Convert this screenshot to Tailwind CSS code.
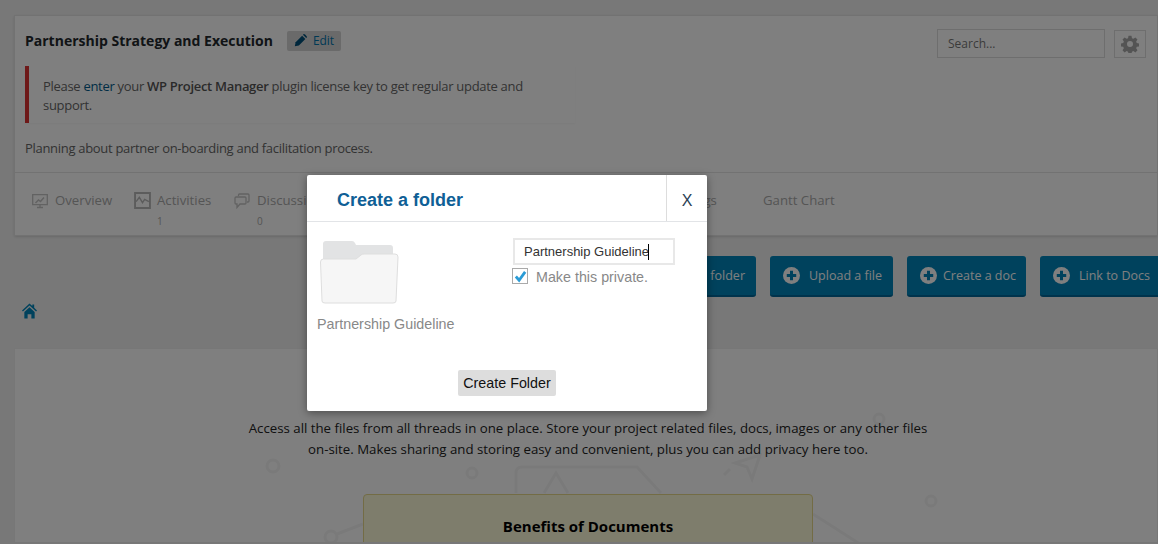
<!DOCTYPE html>
<html lang="en">

<head>
    <meta charset="UTF-8">
    <meta name="viewport" content="width=device-width, initial-scale=1.0">
    <title>Create a folder</title>
    <script src="https://cdn.jsdelivr.net/npm/@tailwindcss/browser@4"></script>
</head>

<body class="relative h-[544px] w-[1158px] overflow-hidden bg-[#f1f1f1] font-['Open_Sans',sans-serif] text-[13px] text-[#444]">

    <div class="pl-[14px] pt-[15px]">
        <!-- project header -->
        <section class="h-[221px] border border-[#e5e5e5] bg-white shadow-sm">
            <div class="flex items-start justify-between pl-[10px] pr-[11px]">
                <div class="w-[560px]">
                    <div class="flex h-[49px] items-center">
                        <h1 class="text-[14px] font-bold text-[#23282d]">Partnership Strategy and Execution</h1>
                        <a class="ml-[14px] flex h-[20px] w-[54px] items-center justify-center gap-[6px] rounded-[2px] bg-[#d5d5d5] text-[12px] tracking-[-0.1px] text-[#0073aa]">
                            <svg class="h-[13px] w-[13px]" viewBox="0 0 16 16" fill="#004f78"><path d="M1 15l1-5 8-8 4 4-8 8z" /><path d="M11 1l1-1q1 0 2 1l1 1q1 1 1 2l-1 1z" /></svg>
                            Edit
                        </a>
                    </div>
                    <div class="mt-[1px] flex h-[57px] w-[550px] items-center border-l-4 border-[#dc3232] bg-white pl-[14px] pr-[20px] pt-[2px] leading-[19px] tracking-[-0.3px] text-[#666] shadow-[0_1px_2px_rgba(0,0,0,0.04)]">
                        <p>Please <a class="text-[#005a8a]">enter</a> your <b class="font-semibold text-[#555]">WP Project Manager</b> plugin license key to get regular update and support.</p>
                    </div>
                    <p class="mt-[16px] tracking-[-0.3px] text-[#666]">Planning about partner on-boarding and facilitation process.</p>
                </div>
                <div class="flex items-center gap-[9px] pt-[13px]">
                    <input type="text" placeholder="Search..." class="h-[29px] w-[168px] border border-[#ddd] bg-white px-[10px] text-[12px] text-[#777] placeholder:text-[#777]">
                    <div class="flex h-[28px] w-[32px] items-center justify-center border border-[#ddd]">
                        <svg class="h-[18px] w-[18px]" viewBox="0 0 24 24" fill="#a8a8a8"><path d="M10 1h4l.6 3.200 1.900.8 2.700-1.800 2.800 2.800-1.800 2.700.8 1.900 3 .6v4l-3 .6-.8 1.900 1.800 2.700-2.800 2.800-2.700-1.800-1.900.8-.6 3h-4l-.6-3-1.900-.8-2.700 1.800-2.800-2.800 1.800-2.700-.8-1.900-3-.6v-4l3-.6.8-1.900-1.800-2.700 2.800-2.800 2.700 1.800 1.900-.8zM12 8a4 4 0 1 0 0 8 4 4 0 0 0 0-8z" fill-rule="evenodd" /></svg>
                    </div>
                </div>
            </div>

            <!-- tabs -->
            <nav class="mt-[13px] flex h-[64px] border-t border-[#e5e5e5] pl-[17px] pt-[18px] text-[13.200px] leading-[18px] text-[#aaa]">
                <div class="flex w-[102px] gap-[7px]">
                    <svg class="mt-[2px] h-[16px] w-[16px]" viewBox="0 0 16 16" fill="none" stroke="#c4c4c4" stroke-width="1.300"><path d="M.7 1.700h14.600v10H.7zM5 14.500h6M8 12v2" /><path d="M3.500 10l3-3 2 1.500 3.500-4" stroke-width="1.500" /></svg>
                    <span>Overview</span>
                </div>
                <div class="flex w-[100px] gap-[6px]">
                    <svg class="mt-[1px] h-[17px] w-[17px]" viewBox="0 0 16 16" fill="none" stroke="#b8b8b8" stroke-width="1.800"><path d="M1 1h14v14H1z" /><path d="M2 9l3-4 3 5 2-3 4 2" stroke-width="1.300" /></svg>
                    <div>
                        <span>Activities</span>
                        <p class="mt-[3px] text-[10px]">1</p>
                    </div>
                </div>
                <div class="flex w-[434px] gap-[7px]">
                    <svg class="mt-[2px] h-[16px] w-[16px]" viewBox="0 0 16 16" fill="none" stroke="#c4c4c4" stroke-width="1.300"><path d="M4.500 3V2q0-1 1-1H14q1 0 1 1v6q0 1-1 1h-1" /><path d="M2 4h9q1 0 1 1v5q0 1-1 1H6l-3 3.500V11H2q-1 0-1-1V5q0-1 1-1z" /></svg>
                    <div>
                        <span>Discussions</span>
                        <p class="mt-[3px] text-[10px]">0</p>
                    </div>
                </div>
                <span class="w-[95px]">Settings</span>
                <span>Gantt Chart</span>
            </nav>
        </section>

        <!-- action buttons -->
        <div class="mt-[20px] flex h-[41px] gap-[14px] text-[12.500px] text-white">
            <a class="ml-[596px] flex w-[146px] shrink-0 items-center justify-end rounded-[3px] border-b-2 border-[#006799] bg-[#0085ba] pr-[11px]"><span class="pt-[2px]">Create a folder</span></a>
            <a class="flex w-[123px] shrink-0 items-center gap-[9px] rounded-[3px] border-b-2 border-[#006799] bg-[#0085ba] pl-[13px]">
                <svg class="h-[17px] w-[17px]" viewBox="0 0 18 18"><circle cx="9" cy="9" r="9" fill="#fff" /><path d="M9 4v10M4 9h10" stroke="#0085ba" stroke-width="3.200" /></svg>
                <span class="pt-[2px]">Upload a file</span>
            </a>
            <a class="flex w-[119px] shrink-0 items-center gap-[6px] rounded-[3px] border-b-2 border-[#006799] bg-[#0085ba] pl-[13px]">
                <svg class="h-[17px] w-[17px]" viewBox="0 0 18 18"><circle cx="9" cy="9" r="9" fill="#fff" /><path d="M9 4v10M4 9h10" stroke="#0085ba" stroke-width="3.200" /></svg>
                <span class="pt-[2px]">Create a doc</span>
            </a>
            <a class="flex w-[124px] shrink-0 items-center gap-[9px] rounded-[3px] border-b-2 border-[#006799] bg-[#0085ba] pl-[13px]">
                <svg class="h-[17px] w-[17px]" viewBox="0 0 18 18"><circle cx="9" cy="9" r="9" fill="#fff" /><path d="M9 4v10M4 9h10" stroke="#0085ba" stroke-width="3.200" /></svg>
                <span class="pt-[2px]">Link to Docs</span>
            </a>
        </div>

        <!-- breadcrumb -->
        <div class="mt-[6px] h-[45px] pl-[8px]">
            <svg class="h-[16px] w-[15px]" viewBox="0 0 16 16" fill="#0085ba"><path d="M8 0l3 2.700V1h2v3.500L16 7.500l-1 1L8 2 1 8.500l-1-1z" /><path d="M2.500 9L8 4l5.500 5v7H10v-4.500H6V16H2.500z" /></svg>
        </div>

        <!-- empty state -->
        <section class="relative h-[195px] overflow-hidden border border-[#eee] bg-white">
            <svg class="absolute left-[-15px] top-[-350px] h-[544px] w-[1158px]" viewBox="0 0 1158 544" fill="none" stroke="#f5f5f5" stroke-width="3">
                <circle cx="273" cy="467" r="6" />
                <circle cx="472" cy="474" r="5" />
                <circle cx="931" cy="502" r="5" />
                <circle cx="879" cy="420" r="5" />
                <circle cx="331" cy="538" r="6" />
                <path d="M337 535l26-10M813 515l50 32M516 494v-20q0-6 6-6h115l24 26M544 494l12-20 12 20M735 464l25-8-8 24-5-12zM730 470l-6 6" />
            </svg>
            <div class="relative pl-[4px] pt-[69px] text-center text-[13.250px] leading-[21px] text-[#222]">
                <p class="mx-auto w-[685px]">Access all the files from all threads in one place. Store your project related files, docs, images or any other files on-site. Makes sharing and storing easy and convenient, plus you can add privacy here too.</p>
            </div>
            <div class="relative ml-[348px] mt-[34px] h-[120px] w-[450px] rounded-[4px] border border-[#e6d98a] bg-[#fcfad9] pt-[20px] text-center text-[15px] font-bold text-black">
                Benefits of Documents
            </div>
        </section>
    </div>

    <!-- backdrop -->
    <div class="absolute inset-0 bg-black/50"></div>

    <!-- modal -->
    <div class="absolute left-[307px] top-[175px] h-[236px] w-[400px] rounded-[2px] bg-white font-['Liberation_Sans',sans-serif] text-[14.300px] shadow-[0_2px_8px_rgba(0,0,0,0.4)]">
        <header class="flex h-[47px] items-stretch justify-between border-b border-[#e2e4e7]">
            <h2 class="pl-[30px] pt-[15px] text-[18px] font-bold leading-[21px] text-[#0f5f96]">Create a folder</h2>
            <button class="w-[41px] border-l border-[#ddd] pt-[5px] text-[16px] text-[#2b3f55]">X</button>
        </header>
        <div class="flex h-[148px]">
            <div class="w-[206px] pl-[10px] pt-[18px]">
                <svg class="ml-[3px] h-[64px] w-[79px]" viewBox="0 0 79 64">
                    <path d="M3 4q0-3 3-3h26q2 0 3 2l1 2h34q3 0 3 3v16H3z" fill="#e2e3e4" />
                    <path d="M.5 22q0-3 3-3H36l5-4q1-1 3-1h31q3 0 3 3l-2 44q0 2-3 2H5q-3 0-3-2z" fill="#f6f6f6" stroke="#dedede" />
                </svg>
                <p class="mt-[10px] whitespace-nowrap text-[#888]">Partnership Guideline</p>
            </div>
            <div class="pt-[16px]">
                <div class="relative">
                    <input type="text" value="Partnership Guideline" class="h-[27px] w-[162px] border-2 border-[#e8e8e8] px-[9px] text-[13px] text-[#333]">
                    <span class="absolute left-[135px] top-[6px] h-[16px] w-px bg-black"></span>
                </div>
                <label class="mt-[3px] flex h-[18px] items-start gap-[8px] leading-[18px] text-[#888]">
                    <span class="-ml-px flex h-[16px] w-[16px] items-center justify-center border border-[#aaa] bg-white">
                        <svg class="h-[13px] w-[13px]" viewBox="0 0 14 14" fill="none" stroke="#2a9bd6" stroke-width="3"><path d="M2 7l3.500 4L12 2" /></svg>
                    </span>
                    Make this private.
                </label>
            </div>
        </div>
        <div class="text-center">
            <button class="h-[26px] w-[98px] rounded-[2px] bg-[#ddd] pt-[2px] text-[14.300px] text-[#111]">Create Folder</button>
        </div>
    </div>

</body>

</html>
